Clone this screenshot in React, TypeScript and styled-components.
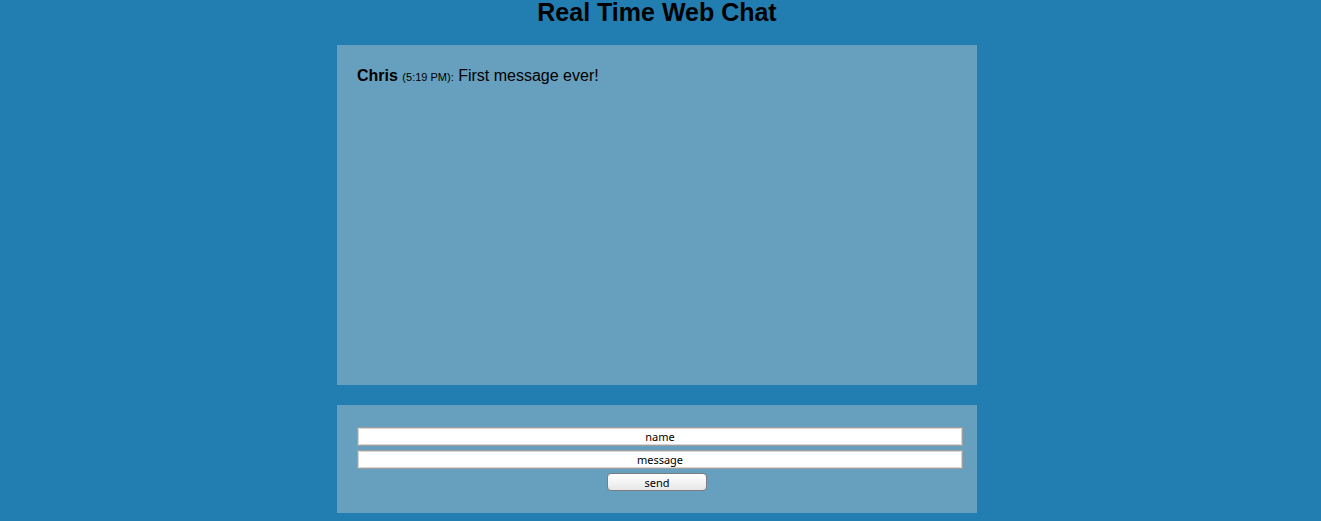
import React from "react";
import styled, { createGlobalStyle } from "styled-components";

const GlobalStyle = createGlobalStyle`
  html, body {
    margin: 0;
    padding: 0;
    background: #227db1;
  }
  body {
    font-family: "Liberation Sans", Arial, Helvetica, sans-serif;
    color: #000;
  }
`;

const Page = styled.div`
  padding: 0 7px 0 0;
  display: flex;
  flex-direction: column;
  align-items: center;
`;

const Title = styled.h1`
  margin: 0 0 21px;
  font-size: 25px;
  line-height: 24px;
  font-weight: bold;
  text-align: center;
`;

const Panel = styled.div`
  width: 640px;
  box-sizing: border-box;
  background: #679fbe;
`;

const Messages = styled(Panel)`
  height: 340px;
  padding: 20px;
`;

const Message = styled.p`
  margin: 0;
  font-size: 16px;
  line-height: 22px;
`;

const Author = styled.strong`
  font-weight: bold;
`;

const Time = styled.span`
  font-size: 11px;
`;

const Form = styled(Panel).attrs({ as: "form" })`
  margin-top: 20px;
  padding: 22px 20px;
  display: flex;
  flex-direction: column;
  align-items: flex-start;
  gap: 4px;
`;

const Field = styled.input`
  box-sizing: border-box;
  width: 606px;
  height: 19px;
  margin: 0;
  padding: 0 2px;
  border: 1px solid #9f9f9f;
  box-shadow: inset 0 0 0 1px #d6d6d6;
  background: #fff;
  font-family: "Noto Sans", "DejaVu Sans", sans-serif;
  font-size: 11px;
  color: #000;
  text-align: center;
  outline: none;
  &::placeholder {
    color: #000;
    opacity: 1;
  }
`;

const Send = styled.button`
  align-self: center;
  box-sizing: border-box;
  width: 100px;
  height: 18px;
  margin: 0;
  padding: 1px 0 0;
  border: 1px solid #7d7d7d;
  border-radius: 4px;
  background: linear-gradient(#ffffff, #f4f4f4 50%, #e6e6e6);
  font-family: "Noto Sans", "DejaVu Sans", sans-serif;
  font-size: 11px;
  line-height: 15px;
  color: #000;
`;

export default function App() {
  return (
    <>
      <GlobalStyle />
      <Page>
        <Title>Real Time Web Chat</Title>
        <Messages>
          <Message>
            <Author>Chris</Author> <Time>(5:19 PM):</Time> First message ever!
          </Message>
        </Messages>
        <Form onSubmit={(e: React.FormEvent) => e.preventDefault()}>
          <Field type="text" placeholder="name" />
          <Field type="text" placeholder="message" />
          <Send type="submit">send</Send>
        </Form>
      </Page>
    </>
  );
}
